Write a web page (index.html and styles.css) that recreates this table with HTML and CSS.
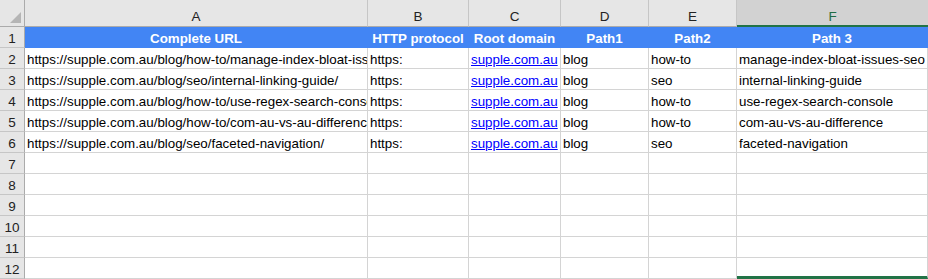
FILE: index.html
```html
<!DOCTYPE html>
<html>
<head>
<meta charset="utf-8">
<link rel="stylesheet" href="styles.css">
</head>
<body>
<div class="sheet">
  <div class="corner"><span class="tri"></span></div>
  <div class="colhead">A</div>
  <div class="colhead">B</div>
  <div class="colhead">C</div>
  <div class="colhead">D</div>
  <div class="colhead">E</div>
  <div class="colhead sel">F</div>

  <div class="rowhead">1</div>
  <div class="cell th">Complete URL</div>
  <div class="cell th">HTTP protocol</div>
  <div class="cell th">Root domain</div>
  <div class="cell th">Path1</div>
  <div class="cell th">Path2</div>
  <div class="cell th">Path 3</div>

  <div class="rowhead">2</div>
  <div class="cell">https://supple.com.au/blog/how-to/manage-index-bloat-issues-seo/</div>
  <div class="cell">https:</div>
  <div class="cell"><a class="link">supple.com.au</a></div>
  <div class="cell">blog</div>
  <div class="cell">how-to</div>
  <div class="cell">manage-index-bloat-issues-seo</div>

  <div class="rowhead">3</div>
  <div class="cell">https://supple.com.au/blog/seo/internal-linking-guide/</div>
  <div class="cell">https:</div>
  <div class="cell"><a class="link">supple.com.au</a></div>
  <div class="cell">blog</div>
  <div class="cell">seo</div>
  <div class="cell">internal-linking-guide</div>

  <div class="rowhead">4</div>
  <div class="cell">https://supple.com.au/blog/how-to/use-regex-search-console/</div>
  <div class="cell">https:</div>
  <div class="cell"><a class="link">supple.com.au</a></div>
  <div class="cell">blog</div>
  <div class="cell">how-to</div>
  <div class="cell">use-regex-search-console</div>

  <div class="rowhead">5</div>
  <div class="cell">https://supple.com.au/blog/how-to/com-au-vs-au-difference/</div>
  <div class="cell">https:</div>
  <div class="cell"><a class="link">supple.com.au</a></div>
  <div class="cell">blog</div>
  <div class="cell">how-to</div>
  <div class="cell">com-au-vs-au-difference</div>

  <div class="rowhead">6</div>
  <div class="cell">https://supple.com.au/blog/seo/faceted-navigation/</div>
  <div class="cell">https:</div>
  <div class="cell"><a class="link">supple.com.au</a></div>
  <div class="cell">blog</div>
  <div class="cell">seo</div>
  <div class="cell">faceted-navigation</div>

  <div class="rowhead">7</div>
  <div class="cell"></div><div class="cell"></div><div class="cell"></div><div class="cell"></div><div class="cell"></div><div class="cell"></div>
  <div class="rowhead">8</div>
  <div class="cell"></div><div class="cell"></div><div class="cell"></div><div class="cell"></div><div class="cell"></div><div class="cell"></div>
  <div class="rowhead">9</div>
  <div class="cell"></div><div class="cell"></div><div class="cell"></div><div class="cell"></div><div class="cell"></div><div class="cell"></div>
  <div class="rowhead">10</div>
  <div class="cell"></div><div class="cell"></div><div class="cell"></div><div class="cell"></div><div class="cell"></div><div class="cell"></div>
  <div class="rowhead">11</div>
  <div class="cell"></div><div class="cell"></div><div class="cell"></div><div class="cell"></div><div class="cell"></div><div class="cell"></div>
  <div class="rowhead">12</div>
  <div class="cell"></div><div class="cell"></div><div class="cell"></div><div class="cell"></div><div class="cell"></div><div class="cell selbottom"></div>
</div>
</body>
</html>
```
FILE: styles.css
```css
html, body {
  margin: 0;
  padding: 0;
  background: #ffffff;
  overflow: hidden;
}
.sheet {
  display: grid;
  grid-template-columns: 25px 343px 101px 92px 88px 88px 1fr;
  grid-template-rows: 27px repeat(12, 21px);
  width: 928px;
  font-family: "Liberation Sans", Arial, sans-serif;
  font-size: 13.33px;
  color: #000;
}
.corner {
  position: relative;
  background: #e6e6e6;
  border-right: 1px solid #ababab;
  border-bottom: 1px solid #ababab;
  box-sizing: border-box;
}
.corner .tri {
  position: absolute;
  right: 3px;
  bottom: 3px;
  width: 0;
  height: 0;
  border-left: 11px solid transparent;
  border-bottom: 11px solid #b5b5b5;
}
.colhead {
  background: #e6e6e6;
  border-right: 1px solid #c6c6c6;
  border-bottom: 1px solid #ababab;
  box-sizing: border-box;
  text-align: center;
  padding-top: 10px;
  line-height: 14px;
  font-size: 13.5px;
  color: #222;
}
.colhead.sel {
  background: #d2d2d2;
  color: #1f6b43;
  border-right: none;
  border-bottom: 2px solid #217346;
}
.rowhead {
  background: #e6e6e6;
  border-right: 1px solid #ababab;
  border-bottom: 1px solid #c6c6c6;
  box-sizing: border-box;
  text-align: center;
  padding-top: 4px;
  line-height: 16px;
  font-size: 13.5px;
  color: #222;
}
.cell {
  border-right: 1px solid #d4d4d4;
  border-bottom: 1px solid #d4d4d4;
  box-sizing: border-box;
  white-space: nowrap;
  overflow: hidden;
  padding: 4px 2px 0 2px;
  line-height: 16px;
}
.cell.th {
  background: #4285f4;
  border-color: #4285f4;
  color: #ffffff;
  font-weight: bold;
  text-align: center;
}
.link {
  color: #0000ff;
  text-decoration: underline;
}
.selbottom {
  border-bottom: 3px solid #217346;
}
```
